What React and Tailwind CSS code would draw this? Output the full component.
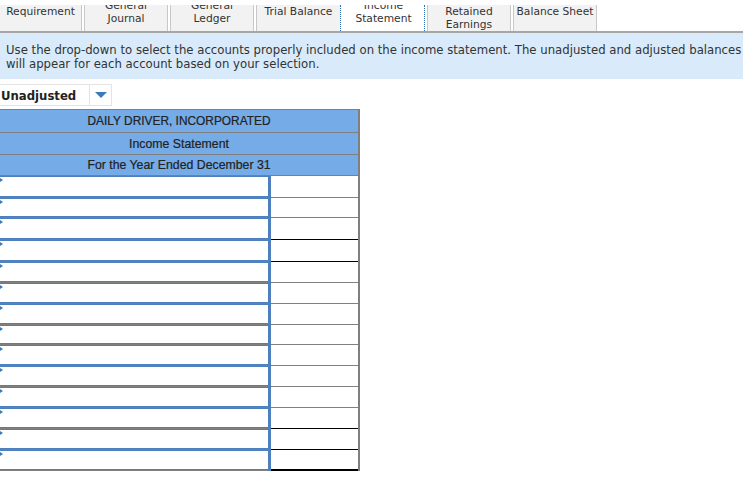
import React from "react";

const gray = "border-[#7f7f7f]";

const rows = [
  { h: "h-[22px]", line: "border-b border-[#7f7f7f]", left: "border-[#5b84b0]" },
  { h: "h-[20px]", line: "border-b border-[#7f7f7f]", left: "border-[#5b84b0]" },
  { h: "h-[22px]", line: "border-b border-black", left: "border-[#5b84b0]" },
  { h: "h-[22px]", line: "border-b border-black", left: "border-[#5b84b0]" },
  { h: "h-[21px]", line: "border-b border-[#7f7f7f]", left: gray },
  { h: "h-[21px]", line: "border-b border-[#7f7f7f]", left: "border-[#5b84b0]" },
  { h: "h-[21px]", line: "border-b border-[#7f7f7f]", left: gray },
  { h: "h-[20px]", line: "border-b border-[#7f7f7f]", left: gray },
  { h: "h-[21px]", line: "border-b border-[#7f7f7f]", left: "border-[#5b84b0]" },
  { h: "h-[21px]", line: "border-b border-[#7f7f7f]", left: gray },
  { h: "h-[21px]", line: "border-b border-[#7f7f7f]", left: "border-[#5b84b0]" },
  { h: "h-[21px]", line: "border-b border-black", left: gray },
  { h: "h-[21px]", line: "border-b border-black", left: "border-[#5b84b0]" },
  { h: "h-[21px]", line: "border-b-2 border-black", left: gray },
];

const headFont = "text-center font-['Liberation_Sans',Arial,sans-serif] text-[#222] [-webkit-text-stroke:0.2px_#222]";

const App = () => {
  return (
    <div className="w-[743px] h-[481px] overflow-hidden bg-white text-[#333] font-['DejaVu_Sans',Verdana,sans-serif] text-[11.7px]">
      {/* tabs */}
      <div className="flex h-[33px] pt-[5px] border-b-2 border-[#a6a6a6] text-[10.7px] leading-[13px] overflow-hidden whitespace-nowrap text-center">
        <div className="w-[82px] bg-[#f2f2f2] border-r border-[#c8c8c8]">Requirement</div>
        <div className="w-[2px]" />
        <div className="w-[84px] bg-[#f2f2f2] border-x border-[#c8c8c8] overflow-hidden">
          <div className="-mt-[6px]">General</div>
          <div>Journal</div>
        </div>
        <div className="w-[2px]" />
        <div className="w-[84px] bg-[#f2f2f2] border-x border-[#c8c8c8] overflow-hidden">
          <div className="-mt-[6px]">General</div>
          <div>Ledger</div>
        </div>
        <div className="w-[2px]" />
        <div className="w-[84px] bg-[#f2f2f2] border-l border-[#c8c8c8]">Trial Balance</div>
        <div className="w-[85px] pl-[2px] -mb-[2px] bg-white border-x border-dotted border-[#2f6fb5] overflow-hidden">
          <div className="-mt-[6px]">Income</div>
          <div>Statement</div>
        </div>
        <div className="w-[2px]" />
        <div className="w-[84px] bg-[#f2f2f2] border-x border-[#c8c8c8]">
          <div>Retained</div>
          <div>Earnings</div>
        </div>
        <div className="w-[2px]" />
        <div className="w-[84px] bg-[#f2f2f2] border-x border-[#c8c8c8]">Balance Sheet</div>
      </div>

      {/* instructions */}
      <div className="h-[46px] bg-[#d9ebfa] pl-[6px] pt-[10px] leading-[14px] whitespace-nowrap overflow-hidden">
        <p>Use the drop-down to select the accounts properly included on the income statement. The unadjusted and adjusted balances</p>
        <p>will appear for each account based on your selection.</p>
      </div>

      {/* balance type dropdown */}
      <div className="mt-[5px] flex w-[112px] h-[22px] border border-[#e4e4e4] border-l-0">
        <div className="w-[90px] pl-[1px] font-bold text-[#222] leading-[22px] border-r border-[#e4e4e4]">Unadjusted</div>
        <div className="flex-1 flex items-center justify-center">
          <svg width="12" height="6" viewBox="0 0 12 6">
            <polygon points="0,0 12,0 6,6" fill="#3b7ab8" />
          </svg>
        </div>
      </div>

      {/* income statement */}
      <div className="mt-[3px] w-[360px] border-t border-r-2 border-[#7f7f7f]">
        <div className={`h-[23px] bg-[#75abe6] border-b border-[#7f7f7f] leading-[23px] text-[11.9px] ${headFont}`}>DAILY DRIVER, INCORPORATED</div>
        <div className={`h-[22px] bg-[#75abe6] border-b border-[#7f7f7f] leading-[22px] text-[12.3px] ${headFont}`}>Income Statement</div>
        <div className={`h-[21px] bg-[#75abe6] border-b border-[#7f7f7f] leading-[21px] text-[12.3px] ${headFont}`}>For the Year Ended December 31</div>
        {rows.map((row, i) => (
          <div key={i} className={`flex ${row.h}`}>
            <div className="relative flex w-[268px] bg-white">
              <div className={`flex-1 border-b ${row.left}`}>
                <div className="h-full border-y border-[#4d80bd]" />
              </div>
              <span className="absolute left-0 top-[2px] w-0 h-0 border-y-[2px] border-l-[3px] border-y-transparent border-l-[#3b7ab8]" />
            </div>
            <div className="w-[3px] bg-[#4d80bd]" />
            <div className={`flex-1 ${row.line}`} />
          </div>
        ))}
      </div>
    </div>
  );
};

export default App;
